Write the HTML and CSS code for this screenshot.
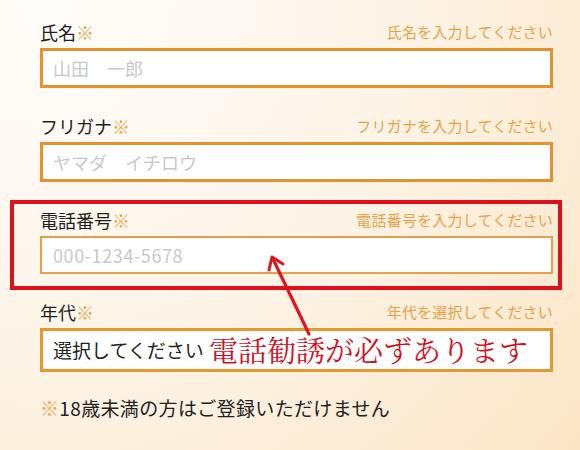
FILE: index.html
```html
<!DOCTYPE html>
<html lang="ja">
<head>
<meta charset="utf-8">
<title>登録フォーム</title>
<link rel="stylesheet" href="styles.css">
</head>
<body>
<div class="page">
  <form class="form">
    <div class="field">
      <div class="field-head">
        <span class="label">氏名<span class="req">※</span></span>
        <span class="hint">氏名を入力してください</span>
      </div>
      <input class="input" type="text" placeholder="山田　一郎">
    </div>
    <div class="field">
      <div class="field-head">
        <span class="label">フリガナ<span class="req">※</span></span>
        <span class="hint">フリガナを入力してください</span>
      </div>
      <input class="input" type="text" placeholder="ヤマダ　イチロウ">
    </div>
    <div class="field">
      <div class="field-head">
        <span class="label">電話番号<span class="req">※</span></span>
        <span class="hint">電話番号を入力してください</span>
      </div>
      <input class="input input-tel" type="text" placeholder="000-1234-5678">
    </div>
    <div class="field">
      <div class="field-head">
        <span class="label">年代<span class="req">※</span></span>
        <span class="hint">年代を選択してください</span>
      </div>
      <div class="select">選択してください</div>
    </div>
    <p class="note"><span class="req">※</span>18歳未満の方はご登録いただけません</p>
  </form>

  <div class="highlight"></div>
  <svg class="arrow" width="580" height="450" viewBox="0 0 580 450">
    <line x1="309" y1="334" x2="273" y2="259" stroke="#e0141c" stroke-width="3.2" stroke-linecap="round"/>
    <polyline points="269,270 272,257 283,264" fill="none" stroke="#e0141c" stroke-width="3" stroke-linecap="round" stroke-linejoin="round"/>
  </svg>
  <div class="warning">電話勧誘が必ずあります</div>
</div>
</body>
</html>
```

FILE: styles.css
```css
html, body {
  margin: 0;
  padding: 0;
}

body {
  width: 580px;
  height: 450px;
  overflow: hidden;
  font-family: "Noto Sans CJK JP", "Noto Sans", sans-serif;
  color: #222;
  background: radial-gradient(circle farthest-corner at 8% 0%, #fffdfa 0%, #fdf4e8 50%, #fbe5c6 100%);
}

.page {
  position: relative;
  width: 580px;
  height: 450px;
}

.form {
  margin: 0;
  padding: 22px 27px 0 40px;
  display: flex;
  flex-direction: column;
  gap: 28px;
}

.field {
  display: flex;
  flex-direction: column;
  gap: 6px;
}

.field-head {
  height: 20px;
  display: flex;
  align-items: center;
  justify-content: space-between;
}

.label {
  font-size: 18px;
  line-height: 20px;
  color: #1e1e1e;
}

.req {
  color: #f0a445;
}

.hint {
  font-size: 15px;
  line-height: 20px;
  letter-spacing: 0.2px;
  color: #eba144;
}

.input {
  box-sizing: border-box;
  width: 513px;
  height: 40px;
  margin: 0;
  padding: 0 10px;
  border: 3px solid #e8902c;
  border-radius: 0;
  background: #fff;
  outline: none;
  font-family: "Noto Sans CJK JP", "Noto Sans", sans-serif;
  font-size: 18px;
  color: #222;
}

.input::placeholder {
  color: #c9c9c9;
  opacity: 1;
}

.input-tel {
  height: 38px;
  border-width: 2px;
  border-color: #e6a04c;
  padding-left: 11px;
  letter-spacing: 0.6px;
}

.select {
  box-sizing: border-box;
  width: 513px;
  height: 44px;
  padding: 0 10px;
  border: 3px solid #e8962e;
  background: #fff;
  font-size: 19px;
  line-height: 38px;
  color: #222;
}

.note {
  margin: -2px 0 0;
  font-size: 19px;
  line-height: 20px;
  letter-spacing: 0.35px;
  color: #222;
}

/* annotation overlays */
.highlight {
  position: absolute;
  left: 10px;
  top: 200px;
  width: 544px;
  height: 82px;
  border: 4px solid #e0101a;
}

.arrow {
  position: absolute;
  left: 0;
  top: 0;
}

.warning {
  position: absolute;
  left: 209px;
  top: 333px;
  font-family: "Noto Serif CJK JP", "Noto Sans CJK JP", serif;
  font-size: 29px;
  line-height: 34px;
  color: #d3111d;
  white-space: nowrap;
}
```
